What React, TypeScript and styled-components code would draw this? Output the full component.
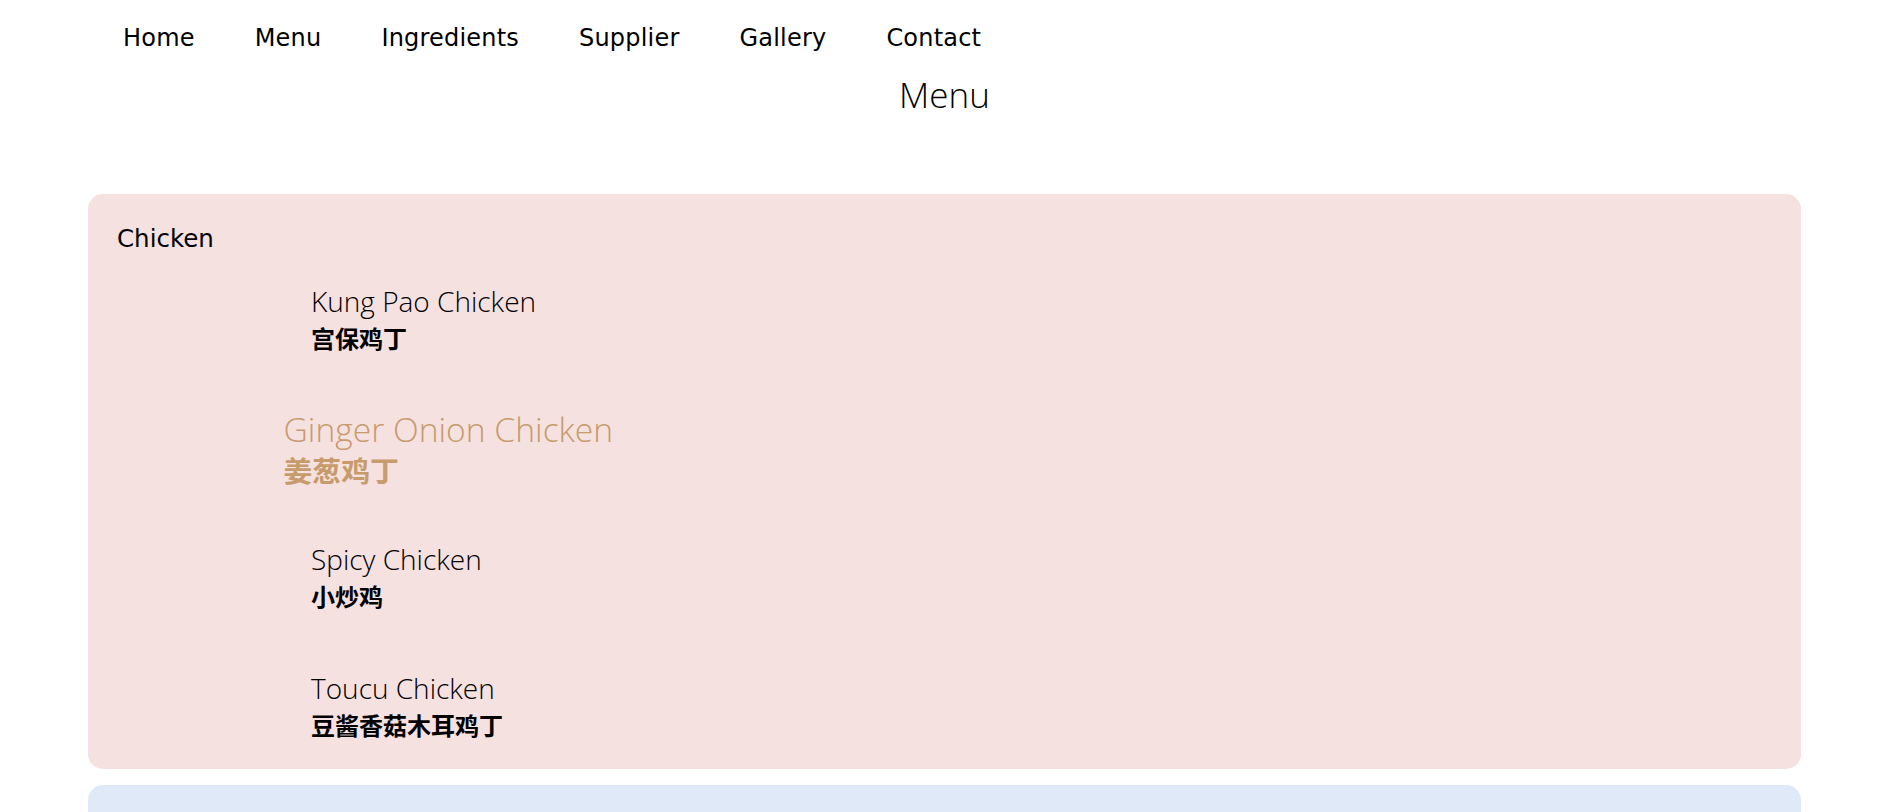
import React from "react";
import styled, { createGlobalStyle } from "styled-components";

const Global = createGlobalStyle`
  body {
    margin: 8px;
    background: #ffffff;
    color: #000000;
    font-family: "Open Sans", sans-serif;
  }
`;

const Nav = styled.nav`
  display: flex;
  gap: 60px;
  padding: 15px 0 0 115px;
`;

const NavLink = styled.a`
  font-family: "DejaVu Sans", "Liberation Sans", sans-serif;
  font-size: 24px;
  line-height: 30px;
  color: #000;
  text-decoration: none;
  letter-spacing: 0.2px;
`;

const Heading = styled.h1`
  margin: 18px 0 0;
  text-align: center;
  font-family: "Open Sans", sans-serif;
  font-weight: 300;
  font-size: 35px;
  line-height: 48px;
`;

const Sections = styled.div`
  display: flex;
  flex-direction: column;
  gap: 16px;
  margin: 75px 80px 0;
`;

const Card = styled.section<{ $bg: string }>`
  background: ${(p) => p.$bg};
  border-radius: 15px;
  padding: 29px 29px 26px;
  min-height: 120px;
`;

const CardTitle = styled.h2`
  margin: 0;
  font-family: "DejaVu Sans", "Liberation Sans", sans-serif;
  font-weight: 400;
  font-size: 24.5px;
  line-height: 32px;
`;

const Items = styled.ul`
  list-style: none;
  margin: 27px 0 0;
  padding: 0 0 0 194px;
  display: flex;
  flex-direction: column;
  gap: 55px;
`;

const Item = styled.li<{ $active?: boolean }>`
  width: fit-content;
  color: ${(p) => (p.$active ? "#c79b6b" : "#000")};
  transform: ${(p) => (p.$active ? "scale(1.2)" : "none")};
  transform-origin: center;
  padding: ${(p) => (p.$active ? "4px 0" : "0")};
`;

const ItemName = styled.div<{ $active?: boolean }>`
  font-family: "Open Sans", sans-serif;
  font-weight: 300;
  font-size: 28px;
  line-height: ${(p) => (p.$active ? "35px" : "38px")};
  white-space: nowrap;
`;

const ItemChinese = styled.div<{ $active?: boolean }>`
  font-family: "Noto Sans CJK SC", "Open Sans", sans-serif;
  font-weight: 700;
  font-size: 24px;
  line-height: ${(p) => (p.$active ? "31px" : "36px")};
  white-space: nowrap;
`;

const navItems = ["Home", "Menu", "Ingredients", "Supplier", "Gallery", "Contact"];

const chicken = [
  { en: "Kung Pao Chicken", zh: "宫保鸡丁" },
  { en: "Ginger Onion Chicken", zh: "姜葱鸡丁", active: true },
  { en: "Spicy Chicken", zh: "小炒鸡" },
  { en: "Toucu Chicken", zh: "豆酱香菇木耳鸡丁" },
];

export default function App() {
  return (
    <>
      <Global />
      <Nav>
        {navItems.map((n) => (
          <NavLink key={n} href="#">
            {n}
          </NavLink>
        ))}
      </Nav>
      <Heading>Menu</Heading>
      <Sections>
        <Card $bg="#f6e1e1">
          <CardTitle>Chicken</CardTitle>
          <Items>
            {chicken.map((c) => (
              <Item key={c.en} $active={c.active}>
                <ItemName $active={c.active}>{c.en}</ItemName>
                <ItemChinese $active={c.active}>{c.zh}</ItemChinese>
              </Item>
            ))}
          </Items>
        </Card>
        <Card $bg="#e0e9f7" />
      </Sections>
    </>
  );
}
